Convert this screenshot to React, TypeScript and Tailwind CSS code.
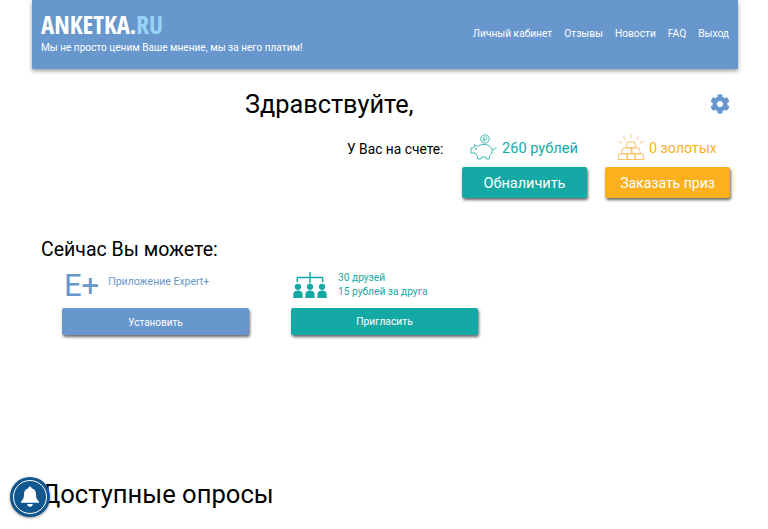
const font = "font-['Roboto','Open_Sans',sans-serif]";

function Piggy() {
  return (
    <svg width="28" height="28" viewBox="0 0 28 28" fill="none" stroke="#3fb8b2" strokeWidth="1" className="shrink-0">
      <circle cx="15" cy="5" r="4.2" />
      <path d="M13.8 7.3V3h2a1.3 1.3 0 0 1 0 2.6h-2.6M12.8 6.4h2.6" strokeWidth="0.8" />
      <path d="M4 10.5l3 2c2-1.400 4.400-2 7-2 4.600 0 8.200 2.600 8.200 6.400 0 2-1 3.600-2.600 4.800l-.4 3.300h-3l-.5-2h-4.400l-.5 2h-3l-.5-3.400c-1-.7-1.800-1.600-2.300-2.600H1v-5h2.500c.4-.8.9-1.500 1.500-2.100z" />
      <path d="M22.200 15.500c1.500 0 3.500-.8 3.800-2.200" />
      <circle cx="6" cy="15" r="0.5" fill="#3fb8b2" />
    </svg>
  );
}

function Gold() {
  return (
    <svg width="28" height="27" viewBox="0 0 28 27" fill="none" stroke="#fcc268" strokeWidth="1" className="shrink-0">
      <path d="M14 0v4M6.500 2.500l2 3.200M21.500 2.500l-2 3.200M1.500 7.500l3.200 1.500M26.500 7.500l-3.200 1.500" />
      <path d="M10.500 8h7l1.500 5.500H9zM6 14h7.500l1 5.500H4.500zM14.500 14H22l1.500 5.500h-8zM2 20h8l1 5.500H1zM10.500 20h7l1 5.500h-9zM18 20h8l1 5.500h-9z" />
    </svg>
  );
}

function Friends() {
  return (
    <svg width="34" height="26" viewBox="0 0 36 28" fill="#14a9a5" className="shrink-0">
      <path d="M17.200 0h1.600v5.200H31a1.500 1.500 0 0 1 1.500 1.500V11h-1.600V6.800H18.800V12h-1.600V6.800H5.100V11H3.500V6.700A1.500 1.500 0 0 1 5 5.200h12.200z" />
      <circle cx="5" cy="16" r="3.400" />
      <circle cx="18" cy="16" r="3.400" />
      <circle cx="31" cy="16" r="3.400" />
      <path d="M0 28v-3.500C0 21.500 2 20 5 20s5 1.500 5 4.500V28zM13 28v-3.500c0-3 2-4.500 5-4.500s5 1.500 5 4.500V28zM26 28v-3.500c0-3 2-4.500 5-4.500s5 1.500 5 4.500V28z" />
    </svg>
  );
}

function Gear() {
  return (
    <svg width="20" height="20" viewBox="0 0 512 512" fill="#6797cd">
      <path d="M487.400 315.700l-42.600-24.600c4.300-23.200 4.300-47 0-70.200l42.600-24.600c4.900-2.800 7.100-8.600 5.500-14-11.100-35.600-30-67.800-54.700-94.600-3.800-4.100-10-5.100-14.800-2.300L380.800 110c-17.900-15.400-38.500-27.300-60.800-35.100V25.800c0-5.600-3.900-10.500-9.400-11.700-36.700-8.200-74.300-7.800-109.200 0-5.500 1.200-9.400 6.100-9.400 11.700V75c-22.200 7.900-42.800 19.800-60.800 35.100L88.700 85.500c-4.900-2.800-11-1.900-14.800 2.300-24.700 26.700-43.600 58.900-54.700 94.600-1.700 5.400.6 11.200 5.500 14L67.300 221c-4.300 23.200-4.300 47 0 70.200l-42.600 24.600c-4.900 2.800-7.100 8.600-5.500 14 11.100 35.600 30 67.800 54.700 94.600 3.800 4.100 10 5.100 14.800 2.300l42.600-24.600c17.900 15.400 38.500 27.300 60.800 35.100v49.200c0 5.600 3.900 10.500 9.400 11.700 36.700 8.200 74.300 7.800 109.200 0 5.500-1.200 9.400-6.100 9.400-11.700v-49.200c22.200-7.900 42.800-19.800 60.800-35.100l42.600 24.600c4.900 2.800 11 1.900 14.800-2.300 24.700-26.700 43.600-58.900 54.700-94.600 1.500-5.500-.7-11.300-5.600-14.100zM256 336c-44.100 0-80-35.900-80-80s35.900-80 80-80 80 35.900 80 80-35.900 80-80 80z" />
    </svg>
  );
}

function Bell() {
  return (
    <svg width="18" height="22" viewBox="0 0 19 22" fill="#fff">
      <path d="M9.500 0a1.600 1.600 0 0 1 1.600 1.800c3 .7 4.700 3.200 4.700 6.200 0 4 1 5.600 3.200 7.800v1.400H0v-1.400C2.200 13.600 3.200 12 3.200 8c0-3 1.700-5.500 4.700-6.200A1.600 1.600 0 0 1 9.500 0z" />
      <path d="M6.500 18.500h6c0 1.600-1.300 2.800-3 2.800s-3-1.200-3-2.800z" />
    </svg>
  );
}

function ActionButton({ color, children, className }: { color: string; children: string; className: string }) {
  return (
    <button type="button" className={`${color} ${className} rounded-[2px] text-white shadow-[1px_2px_3px_rgba(0,0,0,0.6)]`}>
      {children}
    </button>
  );
}

export default function App() {
  return (
    <div className={`${font} relative h-[529px] w-[768px] overflow-hidden bg-white text-black`}>
      <header className="ml-8 flex h-[69px] w-[706px] items-start justify-between bg-[#6797cd] pl-[9px] pr-[9px] shadow-[0_2px_4px_rgba(0,0,0,0.4)]">
        <div className="pt-[9px]">
          <div className="font-['Open_Sans',sans-serif] text-[25px] font-bold leading-[31px] text-white [font-stretch:75%]">
            ANKETKA.<span className="text-[#97d3f5]">RU</span>
          </div>
          <div className="mt-[1px] text-[10.100px] leading-[14px] text-white">Мы не просто ценим Ваше мнение, мы за него платим!</div>
        </div>
        <nav className="flex gap-3 pt-[26px] text-[10.200px] leading-4 text-white">
          <span>Личный кабинет</span>
          <span>Отзывы</span>
          <span>Новости</span>
          <span>FAQ</span>
          <span>Выход</span>
        </nav>
      </header>

      <div className="mt-[15px] flex h-10 items-center pl-[245px] pr-[38px]">
        <h1 className="flex-1 pt-[1px] text-[25.300px] leading-10">Здравствуйте,</h1>
        <Gear />
      </div>

      <div className="mt-[5px] flex pl-[347px]">
        <div className="w-[115px] pt-[10px] text-[13.800px] leading-5">У Вас на счете:</div>
        <div className="flex w-[143px] flex-col">
          <div className="flex h-[37px] items-center gap-[4px] pl-[8px] text-[14.600px] text-[#14a9a5]">
            <Piggy />
            <span className="pt-[3px]">260 рублей</span>
          </div>
          <ActionButton color="bg-[#14a9a5]" className="mt-[1px] h-[31px] w-[125px] pt-[2px] text-[14.500px]">Обналичить</ActionButton>
        </div>
        <div className="flex flex-col">
          <div className="flex h-[37px] items-center gap-[4px] pl-[12px] text-[14.200px] text-[#fdb01d]">
            <Gold />
            <span className="pt-[3px]">0 золотых</span>
          </div>
          <ActionButton color="bg-[#fdb01d]" className="mt-[1px] h-[31px] w-[125px] pt-[2px] text-[14px]">Заказать приз</ActionButton>
        </div>
      </div>

      <h2 className="mt-[38px] pl-[41px] text-[19.500px] leading-7">Сейчас Вы можете:</h2>

      <div className="mt-[6px] flex gap-[42px] pl-[62px]">
        <div className="w-[187px]">
          <div className="flex h-[30px] items-center pl-[2px]">
            <span className="text-[31px] leading-none text-[#6797cd]">E+</span>
            <span className="ml-[9px] -mt-[6px] text-[10.500px] text-[#6797cd]">Приложение Expert+</span>
          </div>
          <ActionButton color="bg-[#6797cd]" className="mt-[8px] h-[27px] w-[187px] pt-[1px] text-[10px]">Установить</ActionButton>
        </div>
        <div className="w-[187px]">
          <div className="flex h-[30px] items-center pl-[2px]">
            <Friends />
            <span className="ml-[11px] text-[10.200px] leading-[14px] text-[#14a9a5]">
              30 друзей
              <br />
              15 рублей за друга
            </span>
          </div>
          <ActionButton color="bg-[#14a9a5]" className="mt-[8px] h-[27px] w-[187px] pt-[1px] text-[10.300px]">Пригласить</ActionButton>
        </div>
      </div>

      <h2 className="mt-[143px] pl-[41px] text-[25.600px] leading-8">Доступные опросы</h2>

      <div className="absolute left-[10px] top-[477px] flex h-10 w-10 items-center justify-center rounded-full bg-[#10568f] shadow-[0_1px_3px_rgba(0,0,0,0.4)]">
        <div className="flex h-[34px] w-[34px] items-center justify-center rounded-full border border-white">
          <Bell />
        </div>
      </div>
    </div>
  );
}
